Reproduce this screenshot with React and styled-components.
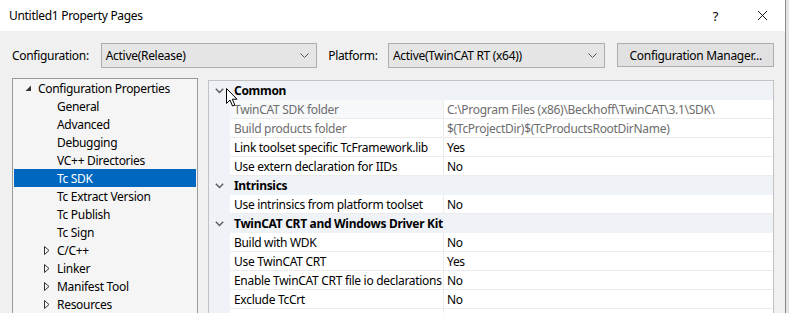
import React from "react";
import styled, { createGlobalStyle } from "styled-components";

const Global = createGlobalStyle`
  html, body { margin: 0; padding: 0; background: #e4e4e4; }
  body {
    font-family: "Noto Sans", "Open Sans", sans-serif;
    font-size: 12px;
    letter-spacing: -0.3px;
    color: #000;
  }
  #root { width: 789px; height: 313px; overflow: hidden; }
`;

const treeItems = [
  { label: "Configuration Properties", level: 0, arrow: "open" },
  { label: "General", level: 1 },
  { label: "Advanced", level: 1 },
  { label: "Debugging", level: 1 },
  { label: "VC++ Directories", level: 1 },
  { label: "Tc SDK", level: 1, selected: true },
  { label: "Tc Extract Version", level: 1 },
  { label: "Tc Publish", level: 1 },
  { label: "Tc Sign", level: 1 },
  { label: "C/C++", level: 1, arrow: "closed" },
  { label: "Linker", level: 1, arrow: "closed" },
  { label: "Manifest Tool", level: 1, arrow: "closed" },
  { label: "Resources", level: 1, arrow: "closed" },
];

const sections = [
  {
    title: "Common",
    rows: [
      { name: "TwinCAT SDK folder", value: "C:\\Program Files (x86)\\Beckhoff\\TwinCAT\\3.1\\SDK\\", dim: true, focus: true },
      { name: "Build products folder", value: "$(TcProjectDir)$(TcProductsRootDirName)", dim: true },
      { name: "Link toolset specific TcFramework.lib", value: "Yes" },
      { name: "Use extern declaration for IIDs", value: "No" },
    ],
  },
  {
    title: "Intrinsics",
    rows: [{ name: "Use intrinsics from platform toolset", value: "No" }],
  },
  {
    title: "TwinCAT CRT and Windows Driver Kit",
    rows: [
      { name: "Build with WDK", value: "No" },
      { name: "Use TwinCAT CRT", value: "Yes" },
      { name: "Enable TwinCAT CRT file io declarations", value: "No" },
      { name: "Exclude TcCrt", value: "No" },
      { name: "", value: "" },
    ],
  },
];

export default function App() {
  return (
    <>
      <Global />
      <Window>
        <TitleBar>
          <span>Untitled1 Property Pages</span>
          <TitleButtons>
            <span>?</span>
            <CloseIcon viewBox="0 0 12 12">
              <path d="M1 1 L11 11 M11 1 L1 11" stroke="#000" strokeWidth="1" fill="none" />
            </CloseIcon>
          </TitleButtons>
        </TitleBar>
        <Body>
          <ConfigRow>
            <Label $width={89}>Configuration:</Label>
            <Combo $width={217}>
              <span>Active(Release)</span>
              <Chevron />
            </Combo>
            <Label $width={60} $left={11}>Platform:</Label>
            <Combo $width={218}>
              <span>Active(TwinCAT RT (x64))</span>
              <Chevron />
            </Combo>
            <Button>Configuration Manager...</Button>
          </ConfigRow>
          <Main>
            <Tree>
              {treeItems.map((item) => (
                <TreeItem key={item.label} $level={item.level} $selected={item.selected}>
                  <Expander>
                    {item.arrow === "open" && (
                      <svg width="7" height="7" viewBox="0 0 7 7">
                        <path d="M6 0.5 L6 6 L0.5 6 Z" fill="#333" />
                      </svg>
                    )}
                    {item.arrow === "closed" && (
                      <svg width="6" height="9" viewBox="0 0 6 9">
                        <path d="M0.5 0.5 L5 4.5 L0.5 8.5 Z" fill="none" stroke="#333" strokeWidth="1" />
                      </svg>
                    )}
                  </Expander>
                  <span>{item.label}</span>
                </TreeItem>
              ))}
            </Tree>
            <Grid>
              {sections.map((section) => (
                <React.Fragment key={section.title}>
                  <CategoryRow>
                    <Gutter>
                      <GridChevron />
                    </Gutter>
                    <CategoryTitle>{section.title}</CategoryTitle>
                  </CategoryRow>
                  {section.rows.map((row, i) => (
                    <PropRow key={section.title + i}>
                      <Gutter />
                      <NameCell $dim={row.dim} $focus={row.focus}>{row.name}</NameCell>
                      <ValueCell $dim={row.dim}>{row.value}</ValueCell>
                    </PropRow>
                  ))}
                </React.Fragment>
              ))}
              <Cursor viewBox="0 0 12 19">
                <path d="M0.5 0.5 L0.5 15.5 L4 12 L6.5 18 L8.8 17 L6.3 11.2 L11 11.2 Z" fill="#fff" stroke="#000" strokeWidth="1" strokeLinejoin="round" />
              </Cursor>
            </Grid>
          </Main>
        </Body>
      </Window>
    </>
  );
}

function Chevron() {
  return (
    <ChevronSvg viewBox="0 0 9 5">
      <path d="M0.5 0.5 L4.5 4.5 L8.5 0.5" fill="none" stroke="#555" strokeWidth="1" />
    </ChevronSvg>
  );
}

function GridChevron() {
  return (
    <svg width="9" height="6" viewBox="0 0 9 6">
      <path d="M0.8 0.8 L4.5 4.5 L8.2 0.8" fill="none" stroke="#5a5a5a" strokeWidth="1.4" />
    </svg>
  );
}

const Window = styled.div`
  width: 785px;
  height: 313px;
  border-right: 1px solid #8a8a8a;
  background: #f0f0f0;
  display: flex;
  flex-direction: column;
  overflow: hidden;
`;

const TitleBar = styled.div`
  height: 31px;
  flex: none;
  background: #fff;
  display: flex;
  align-items: center;
  justify-content: space-between;
  padding: 0 0 0 9px;
`;

const TitleButtons = styled.div`
  display: flex;
  align-items: center;
  gap: 39px;
  padding-right: 17px;
  font-size: 13px;
`;

const CloseIcon = styled.svg`
  width: 11px;
  height: 11px;
`;

const Body = styled.div`
  flex: 1;
  padding: 12px 11px 0 12px;
  display: flex;
  flex-direction: column;
`;

const ConfigRow = styled.div`
  display: flex;
  align-items: center;
  height: 25px;
`;

const Label = styled.div`
  width: ${(p) => p.$width}px;
  margin-left: ${(p) => p.$left || 0}px;
`;

const Combo = styled.div`
  width: ${(p) => p.$width}px;
  height: 25px;
  box-sizing: border-box;
  border: 1px solid #adadad;
  background: #e5e5e5;
  display: flex;
  align-items: center;
  justify-content: space-between;
  padding: 0 7px 0 4px;
`;

const ChevronSvg = styled.svg`
  width: 9px;
  height: 5px;
`;

const Button = styled.div`
  margin-left: 12px;
  width: 157px;
  height: 24px;
  box-sizing: border-box;
  border: 1px solid #adadad;
  background: #e1e1e1;
  display: flex;
  align-items: center;
  justify-content: center;
  align-self: flex-start;
`;

const Main = styled.div`
  flex: 1;
  display: flex;
  gap: 10px;
  margin-top: 10px;
  min-height: 0;
`;

const Tree = styled.div`
  width: 186px;
  box-sizing: border-box;
  border: 1px solid #9a9a9a;
  border-bottom: none;
  background: #f5f5f5;
  padding: 0 1px;
`;

const TreeItem = styled.div`
  height: 18px;
  display: flex;
  align-items: center;
  padding-left: ${(p) => (p.$level === 0 ? 8 : 27)}px;
  background: ${(p) => (p.$selected ? "#0067c0" : "transparent")};
  color: ${(p) => (p.$selected ? "#fff" : "#000")};
  white-space: nowrap;
`;

const Expander = styled.span`
  width: 16px;
  margin-left: -2px;
  margin-right: 2px;
  display: flex;
  align-items: center;
  justify-content: center;
  flex: none;
`;

const Grid = styled.div`
  flex: 1;
  margin-top: 2px;
  box-sizing: border-box;
  border: 1px solid #c2c2c2;
  border-bottom: none;
  background: #fff;
  position: relative;
  overflow: hidden;
`;

const Row = styled.div`
  height: 19px;
  display: flex;
  align-items: stretch;
  white-space: nowrap;
`;

const CategoryRow = styled(Row)`
  background: #eff2f7;
`;

const PropRow = styled(Row)``;

const Gutter = styled.div`
  width: 21px;
  flex: none;
  background: #eff2f7;
  display: flex;
  align-items: center;
  justify-content: center;
`;

const CategoryTitle = styled.div`
  font-weight: 700;
  padding-left: 4px;
  display: flex;
  align-items: center;
`;

const NameCell = styled.div`
  width: 214px;
  flex: none;
  box-sizing: border-box;
  padding-left: 4px;
  display: flex;
  align-items: center;
  border-bottom: 1px solid #ececec;
  border-right: 1px solid #ececec;
  background: ${(p) => (p.$focus ? "#f7f8fa" : "#fff")};
  color: ${(p) => (p.$dim ? "#6d6d6d" : "#000")};
  overflow: hidden;
`;

const ValueCell = styled.div`
  flex: 1;
  padding-left: 3px;
  display: flex;
  align-items: center;
  border-bottom: 1px solid #ececec;
  color: ${(p) => (p.$dim ? "#6d6d6d" : "#000")};
`;

const Cursor = styled.svg`
  position: absolute;
  left: 17px;
  top: 7px;
  width: 12px;
  height: 19px;
`;
